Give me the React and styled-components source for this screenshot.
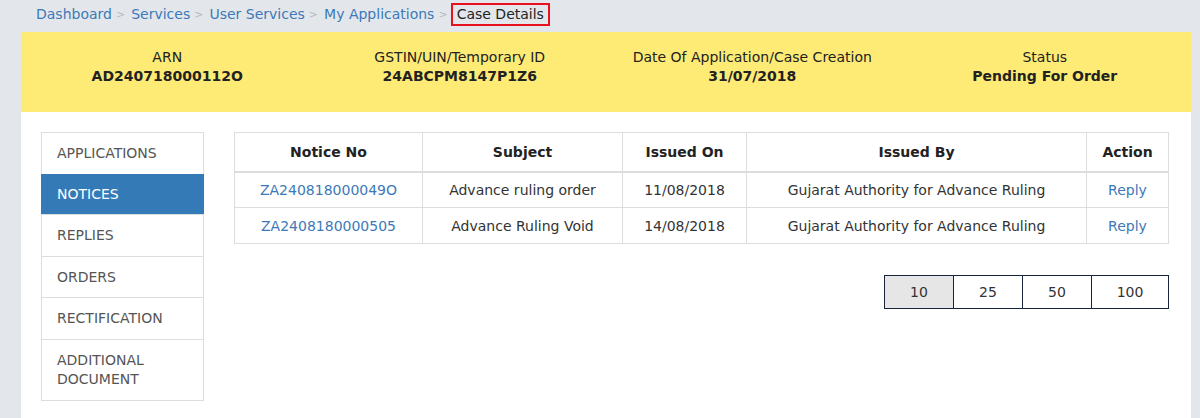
import styled, { createGlobalStyle } from 'styled-components';

const GlobalStyle = createGlobalStyle`
  html, body {
    margin: 0;
    padding: 0;
    background: #e3e7eb;
    font-family: "DejaVu Sans", Verdana, sans-serif;
    font-size: 14px;
    color: #333;
  }
  * { box-sizing: border-box; }
`;

const Page = styled.div`
  width: 1200px;
  height: 418px;
  overflow: hidden;
`;

const Crumbs = styled.div`
  display: flex;
  align-items: center;
  height: 28px;
  margin-bottom: 4px;
  padding-left: 36px;
  font-size: 14px;
`;

const Crumb = styled.a`
  color: #3c79b8;
  text-decoration: none;
`;

const Sep = styled.span`
  color: #b5b9be;
  font-size: 11px;
  margin: 0 6px 0 4px;
`;

const Current = styled.span`
  color: #222;
  border: 2px solid #e8121f;
  padding: 1px 4px 2px;
  margin-left: -3px;
`;

const Panel = styled.div`
  margin-left: 21px;
  width: 1170px;
  background: #fff;
  min-height: 400px;
`;

const InfoBar = styled.div`
  background: #feeb75;
  height: 80px;
  display: grid;
  grid-template-columns: repeat(4, 1fr);
  padding: 16px 0 0;
`;

const InfoCell = styled.div`
  text-align: center;
  font-size: 14px;
  line-height: 19px;
  color: #222;
`;

const InfoValue = styled.div`
  font-weight: bold;
`;

const Body = styled.div`
  display: flex;
  gap: 30px;
  padding: 20px 22px 0 20px;
`;

const Side = styled.ul`
  list-style: none;
  margin: 0;
  padding: 0;
  width: 163px;
  border: 1px solid #ddd;
  border-bottom: none;
  align-self: flex-start;
`;

const SideItem = styled.li`
  padding: 11px 15px 10px;
  line-height: 19.5px;
  font-size: 14px;
  border-bottom: 1px solid #ddd;
  color: ${(p) => (p.$active ? '#fff' : '#555')};
  background: ${(p) => (p.$active ? '#337ab7' : '#fff')};
  margin: ${(p) => (p.$active ? '-1px -1px 0' : '0')};
  padding-left: ${(p) => (p.$active ? '16px' : '15px')};
`;

const Main = styled.div`
  flex: 1;
`;

const Table = styled.table`
  width: 100%;
  border-collapse: collapse;
  font-size: 14px;
`;

const Th = styled.th`
  border: 1px solid #ddd;
  border-bottom: 2px solid #ddd;
  height: 39px;
  font-weight: bold;
  color: #222;
  text-align: center;
  width: ${(p) => p.$w};
`;

const Td = styled.td`
  border: 1px solid #ddd;
  height: 36px;
  text-align: center;
  color: #333;
`;

const Link = styled.a`
  color: #3c79b8;
  text-decoration: none;
`;

const Pager = styled.div`
  display: flex;
  justify-content: flex-end;
  margin-top: 31px;
`;

const PageBtn = styled.button`
  width: ${(p) => p.$w};
  height: 34px;
  font-family: inherit;
  font-size: 14px;
  color: #333;
  background: ${(p) => (p.$active ? '#e6e6e6' : '#fff')};
  border: 1px solid #17243b;
  border-left-width: ${(p) => (p.$first ? '1px' : '0')};
  padding: 0;
`;

const sides = ['APPLICATIONS', 'NOTICES', 'REPLIES', 'ORDERS', 'RECTIFICATION', 'ADDITIONAL DOCUMENT'];

const notices = [
  { no: 'ZA240818000049O', subject: 'Advance ruling order', on: '11/08/2018' },
  { no: 'ZA2408180000505', subject: 'Advance Ruling Void', on: '14/08/2018' },
];

export default function App() {
  return (
    <Page>
      <GlobalStyle />
      <Crumbs>
        <Crumb>Dashboard</Crumb>
        <Sep>&gt;</Sep>
        <Crumb>Services</Crumb>
        <Sep>&gt;</Sep>
        <Crumb>User Services</Crumb>
        <Sep>&gt;</Sep>
        <Crumb>My Applications</Crumb>
        <Sep>&gt;</Sep>
        <Current>Case Details</Current>
      </Crumbs>
      <Panel>
        <InfoBar>
          <InfoCell>
            ARN
            <InfoValue>AD240718000112O</InfoValue>
          </InfoCell>
          <InfoCell>
            GSTIN/UIN/Temporary ID
            <InfoValue>24ABCPM8147P1Z6</InfoValue>
          </InfoCell>
          <InfoCell>
            Date Of Application/Case Creation
            <InfoValue>31/07/2018</InfoValue>
          </InfoCell>
          <InfoCell>
            Status
            <InfoValue>Pending For Order</InfoValue>
          </InfoCell>
        </InfoBar>
        <Body>
          <Side>
            {sides.map((s) => (
              <SideItem key={s} $active={s === 'NOTICES'}>
                {s}
              </SideItem>
            ))}
          </Side>
          <Main>
            <Table>
              <thead>
                <tr>
                  <Th $w="188px">Notice No</Th>
                  <Th $w="200px">Subject</Th>
                  <Th $w="124px">Issued On</Th>
                  <Th $w="340px">Issued By</Th>
                  <Th>Action</Th>
                </tr>
              </thead>
              <tbody>
                {notices.map((n) => (
                  <tr key={n.no}>
                    <Td><Link>{n.no}</Link></Td>
                    <Td>{n.subject}</Td>
                    <Td>{n.on}</Td>
                    <Td>Gujarat Authority for Advance Ruling</Td>
                    <Td><Link>Reply</Link></Td>
                  </tr>
                ))}
              </tbody>
            </Table>
            <Pager>
              <PageBtn $w="70px" $first $active>10</PageBtn>
              <PageBtn $w="69px">25</PageBtn>
              <PageBtn $w="69px">50</PageBtn>
              <PageBtn $w="77px">100</PageBtn>
            </Pager>
          </Main>
        </Body>
      </Panel>
    </Page>
  );
}
